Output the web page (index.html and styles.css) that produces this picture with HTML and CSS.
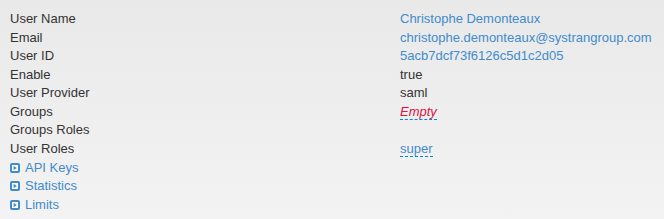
FILE: index.html
```html
<!DOCTYPE html>
<html>
<head>
<meta charset="utf-8">
<link rel="stylesheet" href="styles.css">
</head>
<body>
<div class="panel">
  <table class="info">
    <tr><td class="label">User Name</td><td class="value link">Christophe Demonteaux</td></tr>
    <tr><td class="label">Email</td><td class="value link">christophe.demonteaux@systrangroup.com</td></tr>
    <tr><td class="label">User ID</td><td class="value link">5acb7dcf73f6126c5d1c2d05</td></tr>
    <tr><td class="label">Enable</td><td class="value">true</td></tr>
    <tr><td class="label">User Provider</td><td class="value">saml</td></tr>
    <tr><td class="label">Groups</td><td class="value"><span class="editable empty">Empty</span></td></tr>
    <tr><td class="label">Groups Roles</td><td class="value"></td></tr>
    <tr><td class="label">User Roles</td><td class="value"><span class="editable link">super</span></td></tr>
  </table>
  <div class="toggles">
    <div class="toggle"><svg class="icon" width="10" height="10" viewBox="0 0 10 10"><rect x="1" y="1" width="8" height="8" rx="1" fill="#fff" stroke="#428bca" stroke-width="2"/><path d="M3.6 2.8 L6.8 5 L3.6 7.2 Z" fill="#428bca"/></svg><span>API Keys</span></div>
    <div class="toggle"><svg class="icon" width="10" height="10" viewBox="0 0 10 10"><rect x="1" y="1" width="8" height="8" rx="1" fill="#fff" stroke="#428bca" stroke-width="2"/><path d="M3.6 2.8 L6.8 5 L3.6 7.2 Z" fill="#428bca"/></svg><span>Statistics</span></div>
    <div class="toggle"><svg class="icon" width="10" height="10" viewBox="0 0 10 10"><rect x="1" y="1" width="8" height="8" rx="1" fill="#fff" stroke="#428bca" stroke-width="2"/><path d="M3.6 2.8 L6.8 5 L3.6 7.2 Z" fill="#428bca"/></svg><span>Limits</span></div>
  </div>
</div>
</body>
</html>
```
FILE: styles.css
```css
html, body {
  margin: 0;
  padding: 0;
  height: 100%;
}
body {
  background: linear-gradient(#e9e9e9, #f3f3f3);
  font-family: "Liberation Sans", Arial, sans-serif;
  font-size: 13px;
  line-height: 1.42857;
  color: #333;
}
.panel {
  padding: 10px 10px 0 10px;
}
.info {
  border-collapse: collapse;
}
.info td {
  padding: 0;
  vertical-align: top;
}
.label {
  width: 390px;
}
.link {
  color: #428bca;
}
.editable {
  border-bottom: 1px dashed #0088cc;
}
.empty {
  color: #dd1144;
  font-style: italic;
}
.toggles {
  color: #428bca;
}
.toggle {
  display: flex;
  align-items: center;
  gap: 5px;
}
.icon {
  display: block;
  flex: none;
}
```
